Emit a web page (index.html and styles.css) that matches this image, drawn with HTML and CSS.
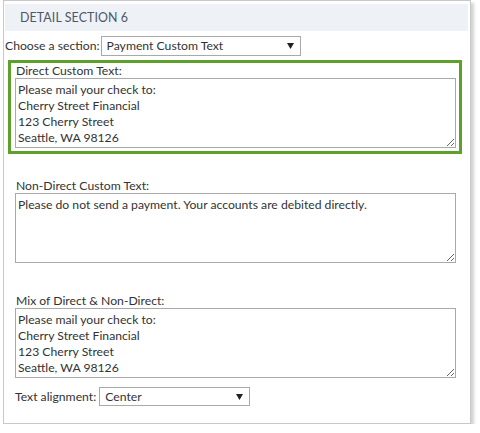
FILE: index.html
```html
<!DOCTYPE html>
<html>
<head>
<meta charset="utf-8">
<link rel="stylesheet" href="styles.css">
</head>
<body>
<div class="panel">
  <div class="header">DETAIL SECTION 6</div>
  <div class="choose-row">
    <span class="label">Choose a section:</span>
    <div class="select select-section">
      <span class="select-text">Payment Custom Text</span>
      <svg class="arrow" width="7" height="6" viewBox="0 0 7 6"><path d="M0 0H7L3.5 6Z" fill="#222"/></svg>
    </div>
  </div>
  <div class="field highlight">
    <div class="field-label">Direct Custom Text:</div>
    <textarea class="box">Please mail your check to:
Cherry Street Financial
123 Cherry Street
Seattle, WA 98126</textarea>
  </div>
  <div class="field">
    <div class="field-label">Non-Direct Custom Text:</div>
    <textarea class="box">Please do not send a payment. Your accounts are debited directly.</textarea>
  </div>
  <div class="field">
    <div class="field-label">Mix of Direct &amp; Non-Direct:</div>
    <textarea class="box">Please mail your check to:
Cherry Street Financial
123 Cherry Street
Seattle, WA 98126</textarea>
    <div class="align-row">
      <span class="label">Text alignment:</span>
      <div class="select select-align">
        <span class="select-text">Center</span>
        <svg class="arrow" width="7" height="6" viewBox="0 0 7 6"><path d="M0 0H7L3.5 6Z" fill="#222"/></svg>
      </div>
    </div>
  </div>
</div>
</body>
</html>
```

FILE: styles.css
```css
html, body {
  margin: 0;
  padding: 0;
  background: #ffffff;
}
body {
  font-family: Lato, "Liberation Sans", sans-serif;
  font-size: 12.2px;
  color: #333333;
}
.panel {
  box-sizing: border-box;
  margin-left: 3px;
  width: 468px;
  height: 424px;
  border: 1px solid #c8c8c8;
  box-shadow: 3px 3px 3px rgba(0, 0, 0, 0.18);
  padding: 3px 2px 0 1px;
  background: #ffffff;
}
.header {
  height: 27px;
  background: #eef2f6;
  color: #4d5866;
  line-height: 27px;
  padding-left: 15px;
  font-size: 12.4px;
  letter-spacing: 0.1px;
}
.choose-row {
  display: flex;
  align-items: center;
  gap: 1px;
  margin-top: 5px;
  height: 20px;
}
.label {
  line-height: 20px;
}
.select {
  box-sizing: border-box;
  display: flex;
  align-items: center;
  justify-content: space-between;
  height: 20px;
  border: 1px solid #a9a9a9;
  background: #ffffff;
  padding: 0 6px 0 5px;
}
.select-section {
  width: 200px;
}
.select-align {
  width: 151px;
  height: 19px;
}
.select-text {
  line-height: 18px;
}
.arrow {
  display: block;
}
.field {
  margin: 21px 6px 0 3px;
  border: 3px solid transparent;
  padding: 0 3px 3px 4px;
}
.field.highlight {
  margin-top: 4px;
  border-color: #5da02c;
}
.field-label {
  line-height: 15px;
  padding-left: 1px;
}
.box {
  display: block;
  box-sizing: border-box;
  width: 100%;
  height: 70px;
  margin: 0;
  border: 1px solid #a9a9a9;
  padding: 3px 2px;
  font-family: Lato, "Liberation Sans", sans-serif;
  font-size: 12.2px;
  line-height: 16px;
  color: #333333;
  background: #ffffff;
  resize: vertical;
  overflow: hidden;
  outline: none;
}
.align-row {
  display: flex;
  align-items: center;
  gap: 3px;
  margin-top: 9px;
  height: 19px;
}
```
